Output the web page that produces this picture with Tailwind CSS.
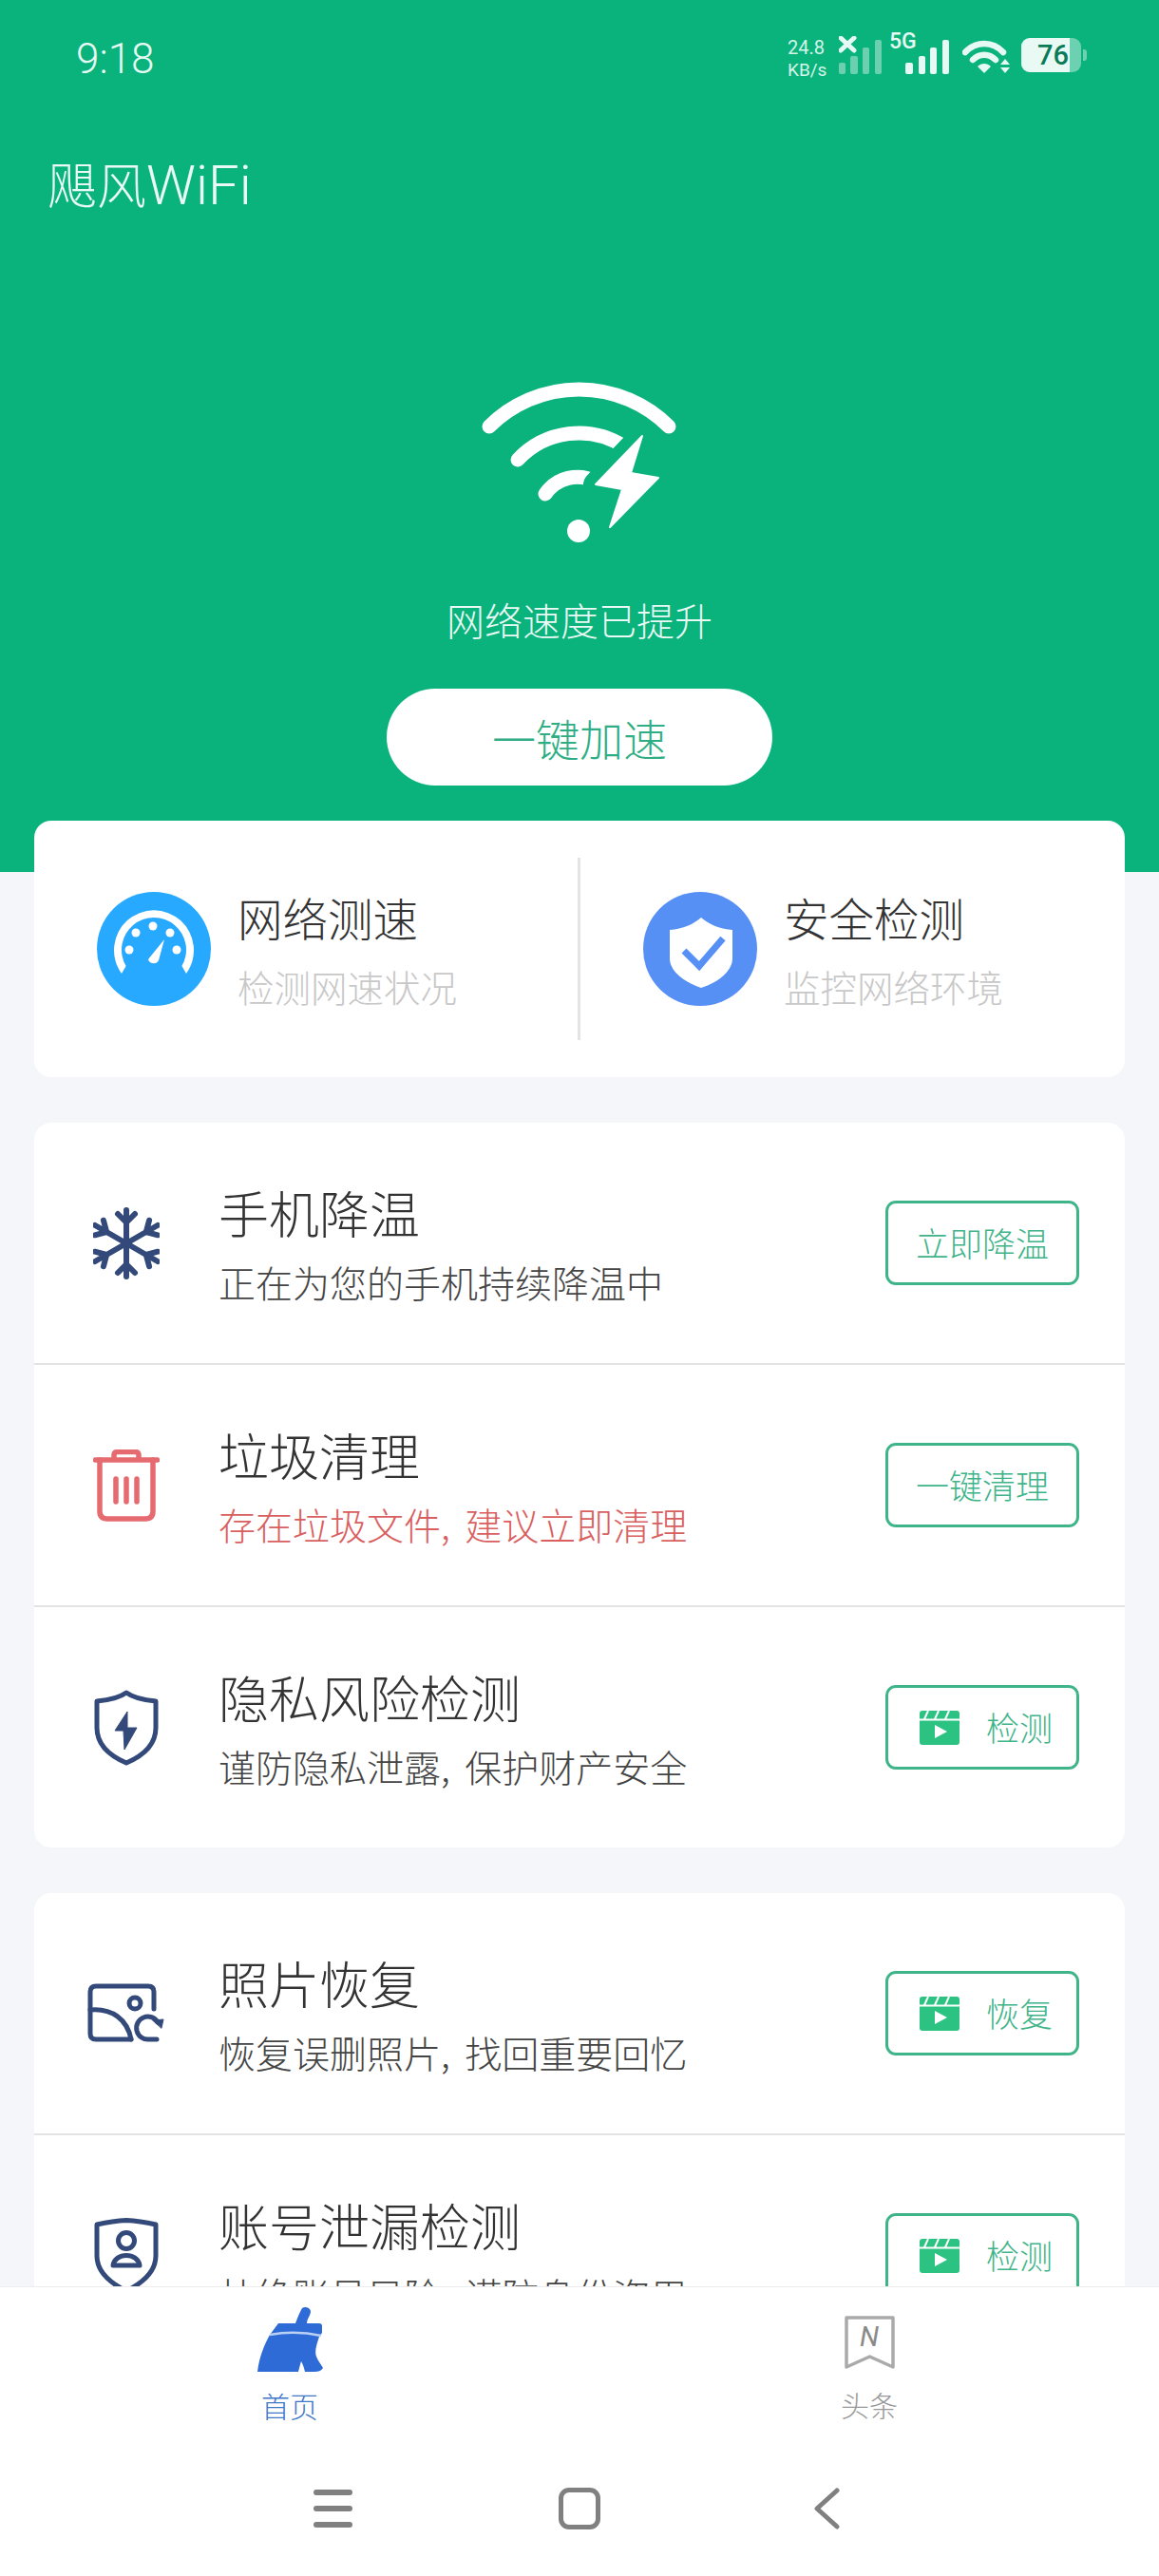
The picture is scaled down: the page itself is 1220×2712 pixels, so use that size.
<!DOCTYPE html>
<html lang="zh-CN">
<head>
    <meta charset="UTF-8">
    <meta name="viewport" content="width=device-width, initial-scale=1.0">
    <title>飓风WiFi</title>
    <script src="https://cdn.jsdelivr.net/npm/@tailwindcss/browser@4"></script>
</head>
<body class="bg-[#f4f6fa] font-['Noto_Sans_CJK_SC','Noto_Sans',sans-serif]">

<div class="w-[1220px] h-[2712px] flex flex-col overflow-hidden">

    <!-- Scroll area -->
    <main class="h-[2407px] shrink-0 overflow-hidden">

        <!-- Green header -->
        <header class="h-[918px] bg-[#0ab27c] flex flex-col text-white">

            <!-- Status bar -->
            <div class="h-[78px] pt-[38px] flex items-end pl-[80px] shrink-0">
                <span class="w-[80px] font-['Roboto'] font-light text-[44px] leading-[40px] text-[#e6faf3] mb-[-4px]">9:18</span>
                <div class="ml-[669px] w-[44px] flex flex-col text-[#d5f5e9] font-['Roboto'] text-[20px] leading-[24px] mt-auto">
                    <span>24.8</span>
                    <span class="text-[19px]">KB/s</span>
                </div>
                <svg class="ml-[10px]" width="46" height="40" viewBox="0 0 46 40">
                    <path d="M2 2 L16 15 M16 2 L2 15" stroke="#e6faf3" stroke-width="5" stroke-linecap="round"/>
                    <g fill="#fff" opacity="0.4">
                        <rect x="0" y="28" width="7" height="12" rx="2"/>
                        <rect x="12" y="21" width="8" height="19" rx="2"/>
                        <rect x="25" y="12" width="7" height="28" rx="2"/>
                        <rect x="38" y="4" width="7" height="36" rx="2"/>
                    </g>
                </svg>
                <div class="relative ml-[9px] w-[61px] h-[40px]">
                    <span class="absolute left-[-2px] top-[-6px] font-['Roboto'] font-medium text-[23px] leading-[24px] text-[#e6faf3]">5G</span>
                    <svg class="absolute left-0 top-0" width="61" height="40" viewBox="0 0 61 40">
                        <g fill="#e6faf3">
                            <rect x="15" y="28" width="8" height="12" rx="2"/>
                            <rect x="29" y="21" width="7" height="19" rx="2"/>
                            <rect x="41" y="12" width="7" height="28" rx="2"/>
                            <rect x="54" y="4" width="7" height="36" rx="2"/>
                        </g>
                    </svg>
                </div>
                <svg class="ml-[14px]" width="50" height="36" viewBox="0 0 50 36">
                    <g fill="none" stroke="#e6faf3" stroke-width="6.5" stroke-linecap="round">
                        <path d="M3 13 C14 1 32 1 43 13"/>
                        <path d="M11 21 C18 14 28 14 35 21"/>
                    </g>
                    <path d="M16 28 C20 24 26 24 30 28 L23 35 Z" fill="#e6faf3"/>
                    <path d="M45 20 L50 26 H40 Z M40 29 H50 L45 35 Z" fill="#e6faf3"/>
                </svg>
                <div class="relative ml-[12px] w-[69px] h-[36px] mb-[2px]">
                    <div class="absolute left-0 top-0 w-[63px] h-[36px] rounded-[9px] bg-white/40"></div>
                    <div class="absolute right-0 top-[12px] w-[4px] h-[12px] rounded-r-[3px] bg-white/40"></div>
                    <div class="absolute left-0 top-0 w-[51px] h-[36px] rounded-l-[9px] bg-[#e9faf4]"></div>
                    <span class="absolute left-[17px] top-0 font-['Roboto'] font-medium text-[29px] leading-[36px] text-[#0a7a57]">76</span>
                </div>
            </div>

            <h1 class="ml-[50px] mt-[80px] font-light text-[52px] leading-[70px] text-[#e9faf4]">飓风<span class="font-['Roboto'] font-light text-[58px]">WiFi</span></h1>

            <!-- Hero -->
            <div class="mt-[172px] flex flex-col items-center">
                <svg width="206" height="172" viewBox="0 0 206 172" fill="none">
                    <path d="M8 47 A134 134 0 0 1 197 47" stroke="#fff" stroke-width="15" stroke-linecap="round"/>
                    <path d="M38 82 A88 88 0 0 1 150 68" stroke="#fff" stroke-width="15" stroke-linecap="round"/>
                    <path d="M67 118 A41 41 0 0 1 120 105" stroke="#fff" stroke-width="15" stroke-linecap="round"/>
                    <path d="M169 57 L157 96 L186 101 L135 153 L148 113 L120 108 Z" fill="#0ab27c" stroke="#0ab27c" stroke-width="26" stroke-linejoin="round"/>
                    <path d="M169 57 L157 96 L186 101 L135 153 L148 113 L120 108 Z" fill="#fff" stroke="#fff" stroke-width="2" stroke-linejoin="round"/>
                    <circle cx="102" cy="157" r="12" fill="#fff"/>
                </svg>
                <p class="mt-[50px] font-light text-[40px] leading-[56px] text-[#e9faf4]">网络速度已提升</p>
                <button class="mt-[45px] w-[406px] h-[102px] rounded-full bg-white font-light text-[46px] text-[#2fae85]">一键加速</button>
            </div>
        </header>

        <!-- Speed / security card -->
        <section class="mx-[36px] -mt-[54px] h-[270px] rounded-[18px] bg-white flex items-center relative">
            <div class="w-[572px] flex items-center pl-[66px]">
                <svg class="shrink-0" width="120" height="120" viewBox="0 0 120 120">
                    <circle cx="60" cy="60" r="60" fill="#27a9ff"/>
                    <path d="M26 86 A42 42 0 1 1 94 86 L89.4 78 A34 34 0 1 0 30.6 78 Z" fill="#fff"/>
                    <circle cx="59" cy="36" r="4.5" fill="#fff"/>
                    <circle cx="41" cy="43" r="4.5" fill="#fff"/>
                    <circle cx="77" cy="43" r="4.5" fill="#fff"/>
                    <circle cx="34" cy="61" r="4.5" fill="#fff"/>
                    <circle cx="84" cy="61" r="4.5" fill="#fff"/>
                    <path d="M71 50 L65 72 A6 6 0 0 1 54 71 Z" fill="#fff"/>
                </svg>
                <div class="ml-[28px]">
                    <p class="font-light text-[47.5px] leading-[60px] text-[#333]">网络测速</p>
                    <p class="mt-[17px] font-light text-[38.5px] leading-[50px] text-[#c8c8c8]">检测网速状况</p>
                </div>
            </div>
            <div class="w-[3px] h-[192px] bg-[#e4e4e4]"></div>
            <div class="flex-1 flex items-center pl-[66px]">
                <svg class="shrink-0" width="120" height="120" viewBox="0 0 120 120">
                    <circle cx="60" cy="60" r="60" fill="#5790f5"/>
                    <path d="M61 27 C69 34 80 39 94 40 V70 C94 85 76 96 61 101 C46 96 28 85 28 70 V40 C42 39 53 34 61 27 Z" fill="#fff"/>
                    <path d="M43 62 L59 78 L84 49" fill="none" stroke="#5790f5" stroke-width="7"/>
                </svg>
                <div class="ml-[28px]">
                    <p class="font-light text-[47.5px] leading-[60px] text-[#333]">安全检测</p>
                    <p class="mt-[17px] font-light text-[38.5px] leading-[50px] text-[#c8c8c8]">监控网络环境</p>
                </div>
            </div>
        </section>

        <!-- Tools card -->
        <section class="mx-[36px] mt-[48px] rounded-[18px] bg-white flex flex-col">
            <div class="h-[253px] flex items-center pr-[48px]">
                <div class="w-[194px] flex justify-center shrink-0">
                    <svg width="70" height="76" viewBox="0 0 70 76" fill="none" stroke="#32497a" stroke-width="6" stroke-linecap="round" stroke-linejoin="round">
                        <g>
                            <path d="M35 38 V3 M26 7 L35 16 L44 7"/>
                        </g>
                        <g transform="rotate(60 35 38)">
                            <path d="M35 38 V0 M26 5 L35 14 L44 5"/>
                        </g>
                        <g transform="rotate(120 35 38)">
                            <path d="M35 38 V0 M26 5 L35 14 L44 5"/>
                        </g>
                        <g transform="rotate(180 35 38)">
                            <path d="M35 38 V3 M26 7 L35 16 L44 7"/>
                        </g>
                        <g transform="rotate(240 35 38)">
                            <path d="M35 38 V0 M26 5 L35 14 L44 5"/>
                        </g>
                        <g transform="rotate(300 35 38)">
                            <path d="M35 38 V0 M26 5 L35 14 L44 5"/>
                        </g>
                    </svg>
                </div>
                <div class="flex-1 pt-[3px]">
                    <p class="font-light text-[53px] leading-[60px] text-[#333]">手机降温</p>
                    <p class="mt-[18px] font-light text-[39px] leading-[50px] text-[#444]">正在为您的手机持续降温中</p>
                </div>
                <button class="w-[204px] h-[89px] rounded-[11px] border-[3px] border-[#3fb489] font-light text-[35px] text-[#3fb489]">立即降温</button>
            </div>
            <div class="h-[2px] bg-[#e3e3e3]"></div>
            <div class="h-[253px] flex items-center pr-[48px]">
                <div class="w-[194px] flex justify-center shrink-0">
                    <svg width="70" height="76" viewBox="0 0 70 76" fill="none" stroke="#e56b70" stroke-width="5.5" stroke-linecap="round" stroke-linejoin="round">
                        <path d="M2.5 11 H67.5"/>
                        <path d="M22 10 V6 Q22 2.5 26 2.5 H44 Q48 2.5 48 6 V10"/>
                        <path d="M7 11 V65 Q7 73 15 73 H55 Q63 73 63 65 V11"/>
                        <path d="M24 31 V55 M35 31 V55 M46 31 V55"/>
                    </svg>
                </div>
                <div class="flex-1 pt-[3px]">
                    <p class="font-light text-[53px] leading-[60px] text-[#333]">垃圾清理</p>
                    <p class="mt-[18px] font-light text-[39px] leading-[50px] [word-spacing:7px] text-[#d9605f]">存在垃圾文件, 建议立即清理</p>
                </div>
                <button class="w-[204px] h-[89px] rounded-[11px] border-[3px] border-[#3fb489] font-light text-[35px] text-[#3fb489]">一键清理</button>
            </div>
            <div class="h-[2px] bg-[#e3e3e3]"></div>
            <div class="h-[253px] flex items-center pr-[48px]">
                <div class="w-[194px] flex justify-center shrink-0">
                    <svg width="68" height="80" viewBox="0 0 68 80" fill="none" stroke="#32497a" stroke-width="5" stroke-linejoin="round">
                        <path d="M34 3 C26 9 14 11 3 12 V40 C3 60 20 71 34 77 C48 71 65 60 65 40 V12 C54 11 42 9 34 3 Z"/>
                        <path d="M35 23 L22 43 H31 L32 63 L45 40 H35 Z" fill="#32497a" stroke-width="1"/>
                    </svg>
                </div>
                <div class="flex-1 pt-[3px]">
                    <p class="font-light text-[53px] leading-[60px] text-[#333]">隐私风险检测</p>
                    <p class="mt-[18px] font-light text-[39px] leading-[50px] [word-spacing:7px] text-[#444]">谨防隐私泄露, 保护财产安全</p>
                </div>
                <button class="w-[204px] h-[89px] rounded-[11px] border-[3px] border-[#3fb489] flex items-center pl-[33px] gap-[28px] font-light text-[35px] text-[#3fb489]">
                    <svg class="shrink-0" width="42" height="36" viewBox="0 0 42 36">
                        <rect width="42" height="36" rx="3" fill="#2cc382"/>
                        <path d="M0 9.5 H42 M9 0 L5 9 M20 0 L16 9 M31 0 L27 9" stroke="#fff" stroke-width="2"/>
                        <path d="M16 15 L29 22 L16 29 Z" fill="#fff"/>
                    </svg>
                    检测
                </button>
            </div>
        </section>

        <!-- Recovery card -->
        <section class="mx-[36px] mt-[48px] rounded-[18px] bg-white flex flex-col">
            <div class="h-[253px] flex items-center pr-[48px]">
                <div class="w-[194px] flex justify-center shrink-0">
                    <svg width="82" height="63" viewBox="0 0 82 63" fill="none" stroke="#32497a" stroke-width="5" stroke-linecap="round" stroke-linejoin="round">
                        <path d="M70 27 V9 Q70 3 64 3 H9 Q3 3 3 9 V53 Q3 59 9 59 H46"/>
                        <path d="M3 28 C26 26 42 38 46 59"/>
                        <circle cx="50" cy="21" r="6"/>
                        <path d="M73 59 H65 A12 12 0 1 1 74 41"/>
                        <path d="M69 39 L80 38 L78 47 Z" fill="#32497a" stroke-width="1"/>
                    </svg>
                </div>
                <div class="flex-1 pt-[3px]">
                    <p class="font-light text-[53px] leading-[60px] text-[#333]">照片恢复</p>
                    <p class="mt-[18px] font-light text-[39px] leading-[50px] [word-spacing:7px] text-[#444]">恢复误删照片, 找回重要回忆</p>
                </div>
                <button class="w-[204px] h-[89px] rounded-[11px] border-[3px] border-[#3fb489] flex items-center pl-[33px] gap-[28px] font-light text-[35px] text-[#3fb489]">
                    <svg class="shrink-0" width="42" height="36" viewBox="0 0 42 36">
                        <rect width="42" height="36" rx="3" fill="#2cc382"/>
                        <path d="M0 9.5 H42 M9 0 L5 9 M20 0 L16 9 M31 0 L27 9" stroke="#fff" stroke-width="2"/>
                        <path d="M16 15 L29 22 L16 29 Z" fill="#fff"/>
                    </svg>
                    恢复
                </button>
            </div>
            <div class="h-[2px] bg-[#e3e3e3]"></div>
            <div class="h-[253px] flex items-center pr-[48px]">
                <div class="w-[194px] flex justify-center shrink-0">
                    <svg width="68" height="80" viewBox="0 0 68 80" fill="none" stroke="#32497a" stroke-width="5" stroke-linejoin="round">
                        <path d="M34 2.5 C24 3 12 5 3 7 V40 C3 58 20 70 34 77 C48 70 65 58 65 40 V7 C56 5 44 3 34 2.5 Z"/>
                        <circle cx="34" cy="24" r="8.5"/>
                        <path d="M20 50 C22 36 46 36 48 50 Z"/>
                    </svg>
                </div>
                <div class="flex-1 pt-[3px]">
                    <p class="font-light text-[53px] leading-[60px] text-[#333]">账号泄漏检测</p>
                    <p class="mt-[18px] font-light text-[39px] leading-[50px] [word-spacing:7px] text-[#444]">杜绝账号风险, 谨防身份盗用</p>
                </div>
                <button class="w-[204px] h-[89px] rounded-[11px] border-[3px] border-[#3fb489] flex items-center pl-[33px] gap-[28px] font-light text-[35px] text-[#3fb489]">
                    <svg class="shrink-0" width="42" height="36" viewBox="0 0 42 36">
                        <rect width="42" height="36" rx="3" fill="#2cc382"/>
                        <path d="M0 9.5 H42 M9 0 L5 9 M20 0 L16 9 M31 0 L27 9" stroke="#fff" stroke-width="2"/>
                        <path d="M16 15 L29 22 L16 29 Z" fill="#fff"/>
                    </svg>
                    检测
                </button>
            </div>
        </section>
    </main>

    <!-- Tab bar -->
    <nav class="h-[173px] shrink-0 bg-white border-t border-[#ececec] flex">
        <div class="flex-1 flex flex-col items-center pt-[21px]">
            <svg width="69" height="69" viewBox="0 0 69 69">
                <path d="M47 1 C50 -1 55 0 56 4 C56 9 52 12 52 17 H65 Q68 17 68 20 V27 L65 31 C62 40 60 47 62 52 C64 57 67 60 69 64 C67 67 64 68 60 68 H50 C49 64 48 60 46 57 C45 60 44 64 43 68 H0 C2 52 7 40 13 29 L22 17 H40 C42 12 44 6 47 1 Z" fill="#2e6bd6"/>
                <path d="M13 29 Q40 24 67 30" fill="none" stroke="#b9cff3" stroke-width="2.5"/>
            </svg>
            <span class="mt-[14px] font-light text-[30px] leading-[40px] text-[#3f78c8]">首页</span>
        </div>
        <div class="flex-1 flex flex-col items-center pt-[29px]">
            <svg width="53" height="58" viewBox="0 0 53 58" fill="none">
                <path d="M2 3 H51 V55 L26.5 44 L2 55 Z" stroke="#aaa" stroke-width="3.5" stroke-linejoin="round"/>
                <text x="26" y="33" text-anchor="middle" font-family="Roboto" font-style="italic" font-size="29" fill="#8a8a8a">N</text>
            </svg>
            <span class="mt-[16px] font-light text-[30px] leading-[40px] text-[#999]">头条</span>
        </div>
    </nav>

    <!-- System nav -->
    <div class="flex-1 bg-white flex justify-center items-center pb-[10px]">
        <div class="w-[260px] flex justify-center">
            <div class="w-[41px] flex flex-col gap-[11px]">
                <div class="h-[6px] rounded-full bg-[#808080]"></div>
                <div class="h-[6px] rounded-full bg-[#808080]"></div>
                <div class="h-[6px] rounded-full bg-[#808080]"></div>
            </div>
        </div>
        <div class="w-[260px] flex justify-center">
            <div class="w-[44px] h-[44px] rounded-[11px] border-[5px] border-[#808080]"></div>
        </div>
        <div class="w-[260px] flex justify-center">
            <svg width="28" height="44" viewBox="0 0 28 44" fill="none">
                <path d="M25 3 L4 22 L25 41" stroke="#808080" stroke-width="5" stroke-linecap="round" stroke-linejoin="round"/>
            </svg>
        </div>
    </div>
</div>

</body>
</html>
